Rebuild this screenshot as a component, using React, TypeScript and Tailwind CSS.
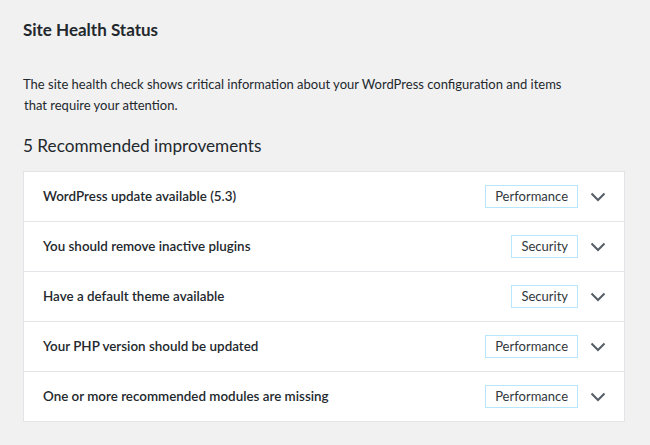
const items = [
  { title: "WordPress update available (5.3)", badge: "Performance" },
  { title: "You should remove inactive plugins", badge: "Security" },
  { title: "Have a default theme available", badge: "Security" },
  { title: "Your PHP version should be updated", badge: "Performance" },
  { title: "One or more recommended modules are missing", badge: "Performance" },
];

const Chevron = () => (
  <svg width="16" height="10" viewBox="0 0 16 10" fill="none" aria-hidden="true">
    <polyline points="1.5,1.5 8,8 14.5,1.5" stroke="#555d66" strokeWidth="2" />
  </svg>
);

export default function App() {
  return (
    <div className="min-h-[445px] bg-[#f1f1f1] px-[23px] pt-[20px] text-[#23282d] font-['Lato','Liberation_Sans',sans-serif]">
      <h2 className="text-[17px] font-bold leading-[20px]">Site Health Status</h2>

      <p className="mt-[34px] text-[13px] leading-[21px]">
        The site health check shows critical information about your WordPress configuration and items
        <br />
        <span className="pl-px">that require your attention.</span>
      </p>

      <h3 className="mt-[18px] text-[17.2px] leading-[24px]">5 Recommended improvements</h3>

      {/* Accordion of issues */}
      <div className="mt-[13px] w-[602px] border border-[#e2e4e7] bg-white">
        {items.map((item, i) => (
          <div
            key={item.title}
            className={`flex items-center pl-[19px] pr-[18px] ${i > 0 ? "h-[50px] border-t border-[#e2e4e7]" : "h-[49px]"}`}
          >
            <span className="flex-1 text-[13.4px] font-semibold">{item.title}</span>
            <span className="flex h-[23px] items-center border border-sky-200 px-[9px] text-[13px] text-[#32373c]">
              {item.badge}
            </span>
            <span className="ml-[12px] flex w-[16px] justify-center">
              <Chevron />
            </span>
          </div>
        ))}
      </div>
    </div>
  );
}
